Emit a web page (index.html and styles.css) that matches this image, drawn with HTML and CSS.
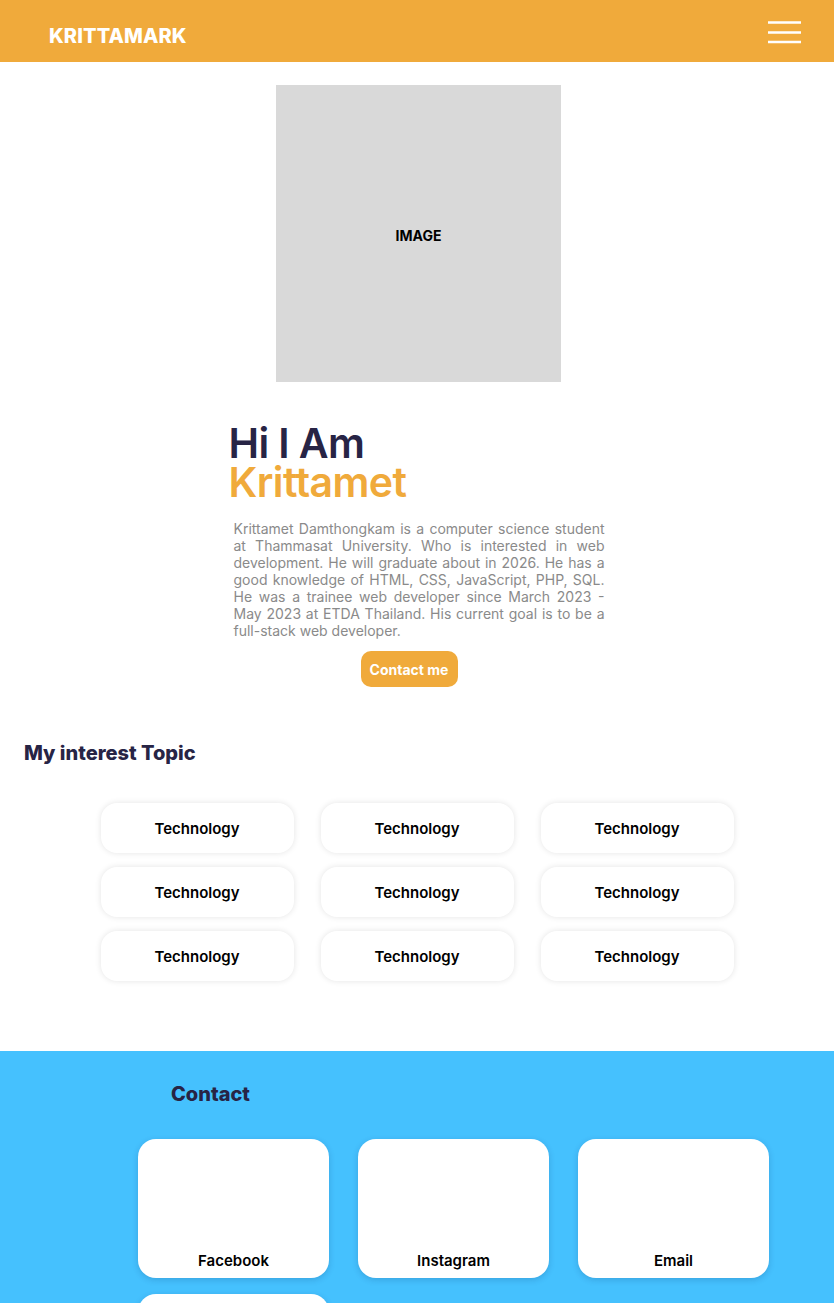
FILE: index.html
```html
<!DOCTYPE html>
<html lang="en">
<head>
<meta charset="utf-8">
<title>Krittamark</title>
<link rel="stylesheet" href="styles.css">
</head>
<body>
<header class="topbar">
  <div class="logo">KRITTAMARK</div>
  <button class="menu" aria-label="Menu">
    <svg width="33" height="24" viewBox="0 0 33 24"><path d="M0 2.5H33M0 12.5H33M0 22H33" stroke="#fff" stroke-width="2.6"/></svg>
  </button>
</header>

<main>
  <section class="hero">
    <div class="photo">IMAGE</div>
    <div class="intro">
      <h1 class="title"><span class="hi">Hi I Am</span><span class="name">Krittamet</span></h1>
      <p class="bio">Krittamet Damthongkam is a computer science student at Thammasat University. Who is interested in web development. He will graduate about in 2026. He has a good knowledge of HTML, CSS, JavaScript, PHP, SQL. He was a trainee web developer since March 2023 - May 2023 at ETDA Thailand. His current goal is to be a full-stack web developer.</p>
      <a class="btn" href="#contact">Contact me</a>
    </div>
  </section>

  <section class="interest">
    <h2 class="section-title">My interest Topic</h2>
    <div class="topics">
      <div class="topic">Technology</div>
      <div class="topic">Technology</div>
      <div class="topic">Technology</div>
      <div class="topic">Technology</div>
      <div class="topic">Technology</div>
      <div class="topic">Technology</div>
      <div class="topic">Technology</div>
      <div class="topic">Technology</div>
      <div class="topic">Technology</div>
    </div>
  </section>

  <section class="contact" id="contact">
    <h2 class="section-title contact-title">Contact</h2>
    <div class="contact-grid">
      <div class="contact-card">Facebook</div>
      <div class="contact-card">Instagram</div>
      <div class="contact-card">Email</div>
      <div class="contact-card">Line</div>
    </div>
  </section>
</main>
</body>
</html>
```

FILE: styles.css
```css
* { box-sizing: border-box; }

body {
  margin: 0;
  font-family: Inter, "Noto Sans", sans-serif;
  background: #fff;
  color: #000;
}

.topbar {
  height: 62px;
  background: #F0AA3B;
  display: flex;
  align-items: center;
  justify-content: space-between;
  padding: 0 33px 0 49px;
}

.logo {
  color: #fff;
  font-weight: 800;
  font-size: 20px;
  letter-spacing: 0.1px;
  margin-top: 10px;
}

.menu {
  background: none;
  border: 0;
  padding: 0;
  display: flex;
  margin-top: 1px;
}

.hero {
  display: flex;
  flex-direction: column;
  align-items: center;
  padding-top: 23px;
}

.photo {
  width: 285px;
  height: 297px;
  background: #D9D9D9;
  display: flex;
  align-items: center;
  justify-content: center;
  font-weight: 700;
  font-size: 14px;
  color: #000;
  margin-left: 3px;
  padding-top: 3px;
}

.intro {
  width: 377px;
  display: flex;
  flex-direction: column;
  margin-top: 42px;
}

.title {
  margin: 0;
  font-size: 41px;
  line-height: 39px;
  font-weight: 600;
  letter-spacing: -0.6px;
  display: flex;
  flex-direction: column;
}

.hi { color: #272445; display: block; height: 39px; }
.name { color: #F0AA3B; display: block; height: 39px; }

.bio {
  margin: 18px 1px 0 5px;
  font-size: 14px;
  line-height: 17px;
  color: #8A8A8A;
  text-align: justify;
}

.btn {
  align-self: flex-start;
  margin: 12px 0 0 132px;
  width: 97px;
  height: 36px;
  border-radius: 10px;
  background: #F0AA3B;
  color: #fff;
  font-weight: 700;
  font-size: 14px;
  display: flex;
  align-items: center;
  justify-content: center;
  text-decoration: none;
}

.section-title {
  margin: 0;
  font-size: 20px;
  font-weight: 800;
  color: #272445;
}

.interest {
  padding: 54px 0 70px;
}

.interest .section-title {
  margin-left: 24px;
}

.topics {
  display: grid;
  grid-template-columns: repeat(3, 193px);
  grid-auto-rows: 50px;
  column-gap: 27px;
  row-gap: 14px;
  justify-content: center;
  margin-top: 38px;
}

.topic {
  background: #fff;
  border-radius: 16px;
  box-shadow: 0 0 6px rgba(0, 0, 0, 0.11);
  display: flex;
  align-items: center;
  justify-content: center;
  font-weight: 600;
  font-size: 15px;
}

.contact {
  background: #45C1FE;
  padding: 31px 0 40px;
}

.contact-title {
  margin-left: 171px;
}

.contact-grid {
  display: grid;
  grid-template-columns: repeat(3, 191px);
  grid-auto-rows: 139px;
  column-gap: 29px;
  row-gap: 16px;
  margin: 33px 0 0 138px;
}

.contact-card {
  background: #fff;
  border-radius: 18px;
  box-shadow: 0 2px 6px rgba(0, 40, 90, 0.18);
  display: flex;
  align-items: flex-end;
  justify-content: center;
  padding-bottom: 8px;
  font-weight: 600;
  font-size: 15px;
}
```
